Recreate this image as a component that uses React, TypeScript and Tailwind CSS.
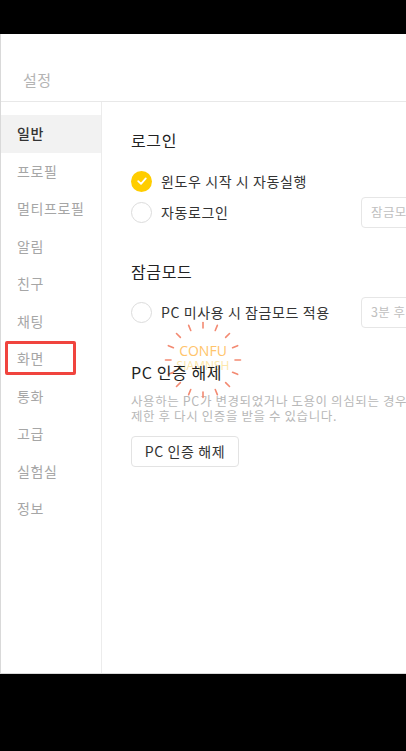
const menu = ["일반", "프로필", "멀티프로필", "알림", "친구", "채팅", "화면", "통화", "고급", "실험실", "정보"];

const font = { fontFamily: '"Noto Sans CJK KR", "Noto Sans", sans-serif' };

const Check = ({ on }: { on?: boolean }) =>
  on ? (
    <span className="flex h-[21px] w-[21px] shrink-0 items-center justify-center rounded-full bg-[#ffcd00]">
      <svg width="12" height="12" viewBox="0 0 12 12" fill="none">
        <path d="M2.2 6.2 5 8.8 9.8 3.4" stroke="white" strokeWidth="1.8" strokeLinecap="round" strokeLinejoin="round" />
      </svg>
    </span>
  ) : (
    <span className="h-[21px] w-[21px] shrink-0 rounded-full border-[1.5px] border-[#dcdcdc] bg-white" />
  );

const Row = ({ on, label, input }: { on?: boolean; label: string; input?: string }) => (
  <div className="flex h-[31px] items-center">
    <div className="flex w-[230px] shrink-0 items-center gap-[9px]">
      <Check on={on} />
      <span className="text-[14px] tracking-[0.6px] text-[#333]">{label}</span>
    </div>
    {input && (
      <div className="flex h-[31px] w-[110px] shrink-0 items-center rounded-[4px] border border-[#e6e6e6] px-[9px] text-[12.5px] tracking-[0.4px] text-[#c0c0c0]">
        {input}
      </div>
    )}
  </div>
);

// the little "confused" burst sitting over the third heading
const Burst = () => {
  const dashes = Array.from({ length: 16 }, (_, i) => {
    const a = (i / 16) * Math.PI * 2;
    return { x1: 40 + Math.cos(a) * 32, y1: 40 + Math.sin(a) * 32, x2: 40 + Math.cos(a) * 37.5, y2: 40 + Math.sin(a) * 37.5 };
  });
  return (
    <div className="pointer-events-none absolute left-[61px] top-[218px] h-[80px] w-[80px]">
      <svg width="80" height="80" viewBox="0 0 80 80" className="absolute inset-0">
        {dashes.map((d, i) => (
          <line key={i} x1={d.x1} y1={d.y1} x2={d.x2} y2={d.y2} stroke="#f38a72" strokeWidth="1.6" strokeLinecap="round" />
        ))}
      </svg>
      <div className="absolute left-0 top-[23px] w-[80px] text-center text-[14px] leading-[16px] text-[#ffc46b]" style={{ fontFamily: '"Open Sans", sans-serif' }}>
        CONFU
      </div>
      <div className="absolute left-0 top-[39px] w-[80px] text-center text-[12px] leading-[14px] text-[#fde7a8]" style={{ fontFamily: '"Open Sans", sans-serif' }}>
        SIAMNSH
      </div>
    </div>
  );
};

export default function App() {
  return (
    <div className="h-[751px] w-[406px] overflow-hidden bg-black pt-[34px]" style={font}>
      <div className="flex h-[640px] flex-col border-b border-l border-[#d9d9d9] bg-white">
        <div className="h-[68px] shrink-0 border-b border-[#e8e8e8] pl-[22px] pt-[33px]">
          <span className="text-[15px] leading-[22px] tracking-[0.5px] text-[#b4b4b4]">설정</span>
        </div>
        <div className="flex flex-1">
          <div className="w-[101px] shrink-0 border-r border-[#ececec] pt-[13px]">
            {menu.map((m, i) => (
              <div
                key={m}
                className={`relative flex h-[37.5px] items-center pl-[16px] text-[14px] tracking-[0.6px] ${i === 0 ? "bg-[#f2f2f2] font-medium text-[#333]" : "text-[#a6a6a6]"}`}
              >
                {m}
                {m === "화면" && (
                  <span className="absolute left-[4px] top-[1px] h-[34px] w-[71px] rounded-[2px] border-[3px] border-[#f0443e]" />
                )}
              </div>
            ))}
          </div>
          <div className="relative flex-1 overflow-hidden pl-[29px]">
            <div className="mt-[26px] h-[24px] text-[16px] leading-[24px] tracking-[0.6px] text-[#222]">로그인</div>
            <div className="mt-[13.5px]">
              <Row on label="윈도우 시작 시 자동실행" />
              <Row label="자동로그인" input="잠금모드 해제" />
            </div>
            <div className="mt-[31.5px] h-[24px] text-[16px] leading-[24px] tracking-[0.6px] text-[#222]">잠금모드</div>
            <div className="mt-[13.5px]">
              <Row label="PC 미사용 시 잠금모드 적용" input="3분 후" />
            </div>
            <Burst />
            <div className="relative mt-[32.5px] h-[24px] text-[16px] leading-[24px] tracking-[0.6px] text-[#222]">PC 인증 해제</div>
            <div className="mt-[8.5px] whitespace-nowrap text-[12.5px] leading-[15px] tracking-[0.6px] text-[#b8b8b8]">
              <div>사용하는 PC가 변경되었거나 도용이 의심되는 경우</div>
              <div>제한 후 다시 인증을 받을 수 있습니다.</div>
            </div>
            <button className="mt-[13.5px] flex h-[31px] w-[108px] items-center justify-center rounded-[4px] border border-[#e3e3e3] text-[14px] tracking-[0.6px] text-[#333]">
              PC 인증 해제
            </button>
          </div>
        </div>
      </div>
    </div>
  );
}
